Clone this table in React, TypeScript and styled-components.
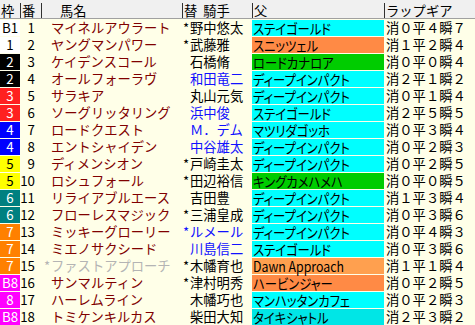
import React from 'react';
import styled, { createGlobalStyle } from 'styled-components';

const GlobalStyle = createGlobalStyle`
  html, body { margin: 0; padding: 0; background: #ffffe8; }
  body { font-family: "Noto Sans CJK JP", "Noto Sans", sans-serif; }
`;

const COLS = '20px 21px 141px 70px 132px 91px';

const Table = styled.div`
  width: 475px;
  display: flex;
  flex-direction: column;
  font-size: 13.3px;
  color: #000;
`;

const HeaderRow = styled.div`
  display: grid;
  grid-template-columns: ${COLS};
  height: 18px;
  background: #f0f0f0;
  border-bottom: 1px solid #a0a0a0;
`;

const HeaderCell = styled.div<{ $sep?: boolean; $pad?: number }>`
  margin-top: 3px;
  height: 15px;
  line-height: 15px;
  padding-left: ${(p) => p.$pad ?? 1}px;
  border-left: ${(p) => (p.$sep ? '1px solid #303030' : 'none')};
  white-space: nowrap;
`;

const Gap = styled.span`
  display: inline-block;
  width: 6px;
`;

const Row = styled.div`
  display: grid;
  grid-template-columns: ${COLS};
  height: 17px;
  line-height: 16px;
  background: #ffffe8;
`;

const Cell = styled.div`
  margin-top: 1px;
  height: 16px;
  white-space: nowrap;
`;

const WakuCell = styled(Cell)<{ $bg: string; $fg: string }>`
  background: ${(p) => p.$bg};
  color: ${(p) => p.$fg};
  text-align: center;
`;

const NumCell = styled(Cell)`
  text-align: right;
  padding-right: 6px;
`;

const NameCell = styled(Cell)<{ $muted?: boolean }>`
  padding-left: 3px;
  color: ${(p) => (p.$muted ? '#b4b4b4' : '#800000')};
`;

const JockeyCell = styled(Cell)<{ $blue?: boolean }>`
  padding-left: 1px;
  color: ${(p) => (p.$blue ? '#1010ff' : '#000')};
`;

const Mark = styled.span`
  display: inline-block;
  width: 7px;
`;

const SireCell = styled(Cell)<{ $bg: string }>`
  background: ${(p) => p.$bg};
  padding-left: 1px;
  font-size: 14px;
`;

const Squeeze = styled.span`
  display: inline-block;
  font-feature-settings: "palt";
  transform: scaleX(0.88);
  transform-origin: left center;
`;

const LapCell = styled(Cell)`
  padding-left: 2px;
`;

type Waku = 'B1' | '1' | '2' | '3' | '4' | '5' | '6' | '7' | '8' | 'B8';

const wakuColor = (w: string): [string, string] => {
  switch (w.replace('B', '')) {
    case '1': return ['#ffffff', '#000000'];
    case '2': return ['#000000', '#ffffff'];
    case '3': return ['#ff2020', '#ffffff'];
    case '4': return ['#0000ff', '#ffffff'];
    case '5': return ['#ffff00', '#000000'];
    case '6': return ['#008080', '#ffffff'];
    case '7': return ['#ff8000', '#ffffff'];
    default: return ['#ff00ff', '#ffffff'];
  }
};

const CYAN = '#00ffff';
const ORANGE = '#ff8a45';
const GREEN = '#00cc00';

interface Horse {
  waku: Waku;
  num: number;
  name: string;
  foreign?: boolean;
  star: boolean;
  jockey: string;
  blue?: boolean;
  sire: string;
  sireBg: string;
  lap: string;
}

const horses: Horse[] = [
  { waku: 'B1', num: 1, name: 'マイネルアウラート', star: true, jockey: '野中悠太', sire: 'ステイゴールド', sireBg: CYAN, lap: '消０平４瞬７' },
  { waku: '1', num: 2, name: 'ヤングマンパワー', star: true, jockey: '武藤雅', sire: 'スニッツェル', sireBg: ORANGE, lap: '消１平２瞬４' },
  { waku: '2', num: 3, name: 'ケイデンスコール', star: false, jockey: '石橋脩', sire: 'ロードカナロア', sireBg: GREEN, lap: '消０平０瞬４' },
  { waku: '2', num: 4, name: 'オールフォーラヴ', star: false, jockey: '和田竜二', blue: true, sire: 'ディープインパクト', sireBg: CYAN, lap: '消２平１瞬２' },
  { waku: '3', num: 5, name: 'サラキア', star: false, jockey: '丸山元気', sire: 'ディープインパクト', sireBg: CYAN, lap: '消０平１瞬４' },
  { waku: '3', num: 6, name: 'ソーグリッタリング', star: false, jockey: '浜中俊', blue: true, sire: 'ステイゴールド', sireBg: CYAN, lap: '消２平５瞬５' },
  { waku: '4', num: 7, name: 'ロードクエスト', star: false, jockey: 'Ｍ．デム', blue: true, sire: 'マツリダゴッホ', sireBg: CYAN, lap: '消０平３瞬４' },
  { waku: '4', num: 8, name: 'エントシャイデン', star: false, jockey: '中谷雄太', blue: true, sire: 'ディープインパクト', sireBg: CYAN, lap: '消０平２瞬３' },
  { waku: '5', num: 9, name: 'ディメンシオン', star: true, jockey: '戸崎圭太', sire: 'ディープインパクト', sireBg: CYAN, lap: '消０平２瞬５' },
  { waku: '5', num: 10, name: 'ロシュフォール', star: true, jockey: '田辺裕信', sire: 'キングカメハメハ', sireBg: GREEN, lap: '消０平０瞬５' },
  { waku: '6', num: 11, name: 'リライアブルエース', star: false, jockey: '吉田豊', sire: 'ディープインパクト', sireBg: CYAN, lap: '消１平３瞬４' },
  { waku: '6', num: 12, name: 'フローレスマジック', star: true, jockey: '三浦皇成', sire: 'ディープインパクト', sireBg: CYAN, lap: '消０平３瞬６' },
  { waku: '7', num: 13, name: 'ミッキーグローリー', star: true, jockey: 'ルメール', blue: true, sire: 'ディープインパクト', sireBg: CYAN, lap: '消０平４瞬３' },
  { waku: '7', num: 14, name: 'ミエノサクシード', star: false, jockey: '川島信二', blue: true, sire: 'ステイゴールド', sireBg: CYAN, lap: '消０平３瞬６' },
  { waku: '7', num: 15, name: 'ファストアプローチ', foreign: true, star: true, jockey: '木幡育也', sire: 'Dawn Approach', sireBg: '#ffa04f', lap: '消１平１瞬４' },
  { waku: 'B8', num: 16, name: 'サンマルティン', star: true, jockey: '津村明秀', sire: 'ハービンジャー', sireBg: ORANGE, lap: '消０平２瞬５' },
  { waku: '8', num: 17, name: 'ハーレムライン', star: false, jockey: '木幡巧也', sire: 'マンハッタンカフェ', sireBg: CYAN, lap: '消０平２瞬３' },
  { waku: 'B8', num: 18, name: 'トミケンキルカス', star: false, jockey: '柴田大知', sire: 'タイキシャトル', sireBg: '#00e6e6', lap: '消２平３瞬２' },
];

export default function App() {
  return (
    <>
      <GlobalStyle />
      <Table>
        <HeaderRow>
          <HeaderCell>枠</HeaderCell>
          <HeaderCell $sep>番</HeaderCell>
          <HeaderCell $sep $pad={18}>馬名</HeaderCell>
          <HeaderCell $sep>替<Gap />騎手</HeaderCell>
          <HeaderCell $sep>父</HeaderCell>
          <HeaderCell $sep>ラップギア</HeaderCell>
        </HeaderRow>
        {horses.map((h) => {
          const [bg, fg] = wakuColor(h.waku);
          return (
            <Row key={h.num}>
              <WakuCell $bg={bg} $fg={fg}>{h.waku}</WakuCell>
              <NumCell>{h.num}</NumCell>
              <NameCell $muted={h.foreign}>
                <Mark>{h.foreign ? '*' : ''}</Mark>
                {h.name}
              </NameCell>
              <JockeyCell $blue={h.blue}>
                <Mark>{h.star ? '*' : ''}</Mark>
                {h.jockey}
              </JockeyCell>
              <SireCell $bg={h.sireBg}>
                <Squeeze>{h.sire}</Squeeze>
              </SireCell>
              <LapCell>{h.lap}</LapCell>
            </Row>
          );
        })}
      </Table>
    </>
  );
}
